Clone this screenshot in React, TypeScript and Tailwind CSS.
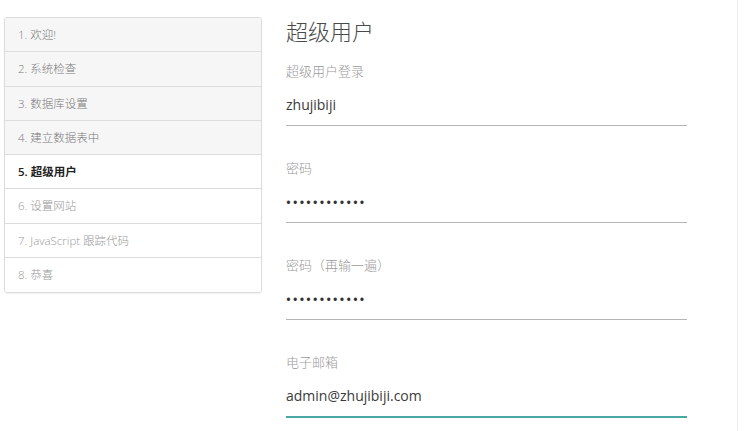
import React from 'react';

const steps = [
  { label: '1. 欢迎!', state: 'done' },
  { label: '2. 系统检查', state: 'done' },
  { label: '3. 数据库设置', state: 'done' },
  { label: '4. 建立数据表中', state: 'done' },
  { label: '5. 超级用户', state: 'active' },
  { label: '6. 设置网站', state: 'todo' },
  { label: '7. JavaScript 跟踪代码', state: 'todo' },
  { label: '8. 恭喜', state: 'todo' },
];

const fonts = { fontFamily: '"Open Sans", "Noto Sans CJK SC", sans-serif' };

function Field({ label, value, type = 'text', focused = false }: { label: string; value: string; type?: string; focused?: boolean }) {
  return (
    <div className="mb-[32px] last:mb-0">
      <div className="h-5 text-[13px] leading-5 text-[#9a9a9a] font-light">{label}</div>
      <div
        className={
          focused
            ? 'pt-[14px] pb-[10px] border-b-2 border-[#4aa8a4]'
            : 'pt-[14px] pb-[10px] border-b border-[#b5b5b5]'
        }
      >
        {type === 'password' ? (
          <div className="h-5 leading-5 text-[13px] tracking-[1.8px] font-semibold text-[#333]">{'•'.repeat(value.length)}</div>
        ) : (
          <div className="h-5 leading-5 text-[14px] text-[#3a3a3a]">{value}</div>
        )}
      </div>
    </div>
  );
}

export default function App() {
  return (
    <div className="w-[744px] h-[431px] bg-white overflow-hidden" style={fonts}>
      <div className="w-[738px] h-full border-r border-[#ececec] flex">
        <div className="pl-[4px] pt-[17px]">
          <div className="w-[258px] border border-[#dcdcdc] rounded-[3px] shadow-[0_1px_2px_rgba(0,0,0,0.06)] overflow-hidden">
            {steps.map((s, i) => (
              <div
                key={i}
                className={
                  'h-[34.25px] flex items-center pl-[13px] text-[11.5px] ' +
                  (i < steps.length - 1 ? 'border-b border-[#dcdcdc] ' : '') +
                  (s.state === 'done'
                    ? 'bg-[#f6f6f6] text-[#7a7a7a] font-light'
                    : s.state === 'active'
                      ? 'bg-white text-[#222] font-semibold'
                      : 'bg-white text-[#9a9a9a] font-light')
                }
              >
                {s.label}
              </div>
            ))}
          </div>
        </div>
        <div className="ml-[24px] w-[401px] pt-[16px]">
          <h1 className="h-[30px] leading-[30px] text-[22px] text-[#4a4a4a] font-light mb-[15px]">超级用户</h1>
          <Field label="超级用户登录" value="zhujibiji" />
          <Field label="密码" value="xxxxxxxxxxxx" type="password" />
          <Field label="密码（再输一遍）" value="xxxxxxxxxxxx" type="password" />
          <Field label="电子邮箱" value="admin@zhujibiji.com" focused />
        </div>
      </div>
    </div>
  );
}
